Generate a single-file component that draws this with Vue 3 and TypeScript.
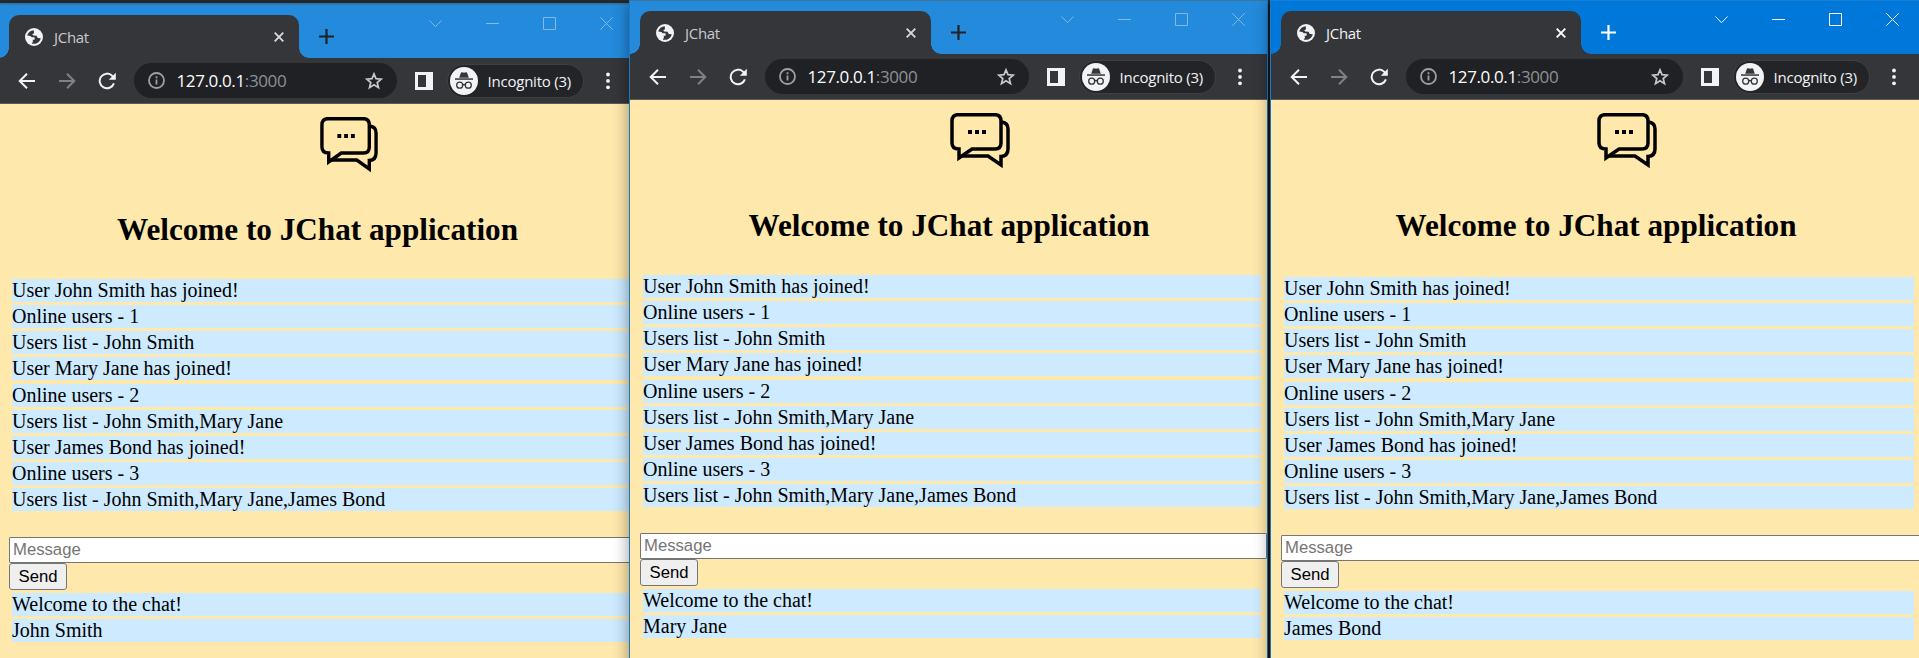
<script setup lang="ts">
interface ChatWindow {
  id: string
  user: string
  x: number
  y: number
  width: number
  tabWidth: number
  active: boolean
  logoWidth: number
  headGap: number
  listGap: number
  contentWidth: number
  listWidth: number
}

const windows: ChatWindow[] = [
  { id: 'john', user: 'John Smith', x: -1, y: 4, width: 636, tabWidth: 290, active: false, logoWidth: 58, headGap: 39, listGap: 32, contentWidth: 617, listWidth: 630 },
  { id: 'mary', user: 'Mary Jane', x: 630, y: 0, width: 637, tabWidth: 291, active: false, logoWidth: 60, headGap: 39, listGap: 32, contentWidth: 618, listWidth: 618 },
  { id: 'james', user: 'James Bond', x: 1271, y: 0, width: 650, tabWidth: 300, active: true, logoWidth: 60, headGap: 39, listGap: 34, contentWidth: 630, listWidth: 630 },
]

const events: string[] = [
  'User John Smith has joined!',
  'Online users - 1',
  'Users list - John Smith',
  'User Mary Jane has joined!',
  'Online users - 2',
  'Users list - John Smith,Mary Jane',
  'User James Bond has joined!',
  'Online users - 3',
  'Users list - John Smith,Mary Jane,James Bond',
]
</script>

<template>
  <div class="desktop">
    <section
      v-for="w in windows"
      :key="w.id"
      class="window"
      :class="{ active: w.active }"
      :style="{ left: w.x + 'px', top: w.y + 'px', width: w.width + 'px' }"
    >
      <header class="titlebar">
        <div class="tab" :style="{ width: w.tabWidth + 'px' }">
          <svg class="globe" viewBox="0 0 18 18">
            <circle cx="9" cy="9" r="9" fill="#f1f3f4" />
            <path d="M8.800 2.200 C5.500 2.300 3 4.500 2.200 7.600 L5.400 7.900 L6.800 9.200 L9.600 9.300 V11.700 H7.600 L8 13.700 L6.700 15.400 C10.500 16.800 15 14.300 15.700 10.200 L12.700 10.100 L11.600 7.700 L8.300 7.500 L7.200 6.300 L9 5.200 Z" fill="#35363a" />
          </svg>
          <span class="tab-title">JChat</span>
          <svg class="tab-close" viewBox="0 0 10 10"><path d="M.7 .7 9.300 9.300M9.300 .7 .7 9.300" /></svg>
        </div>
        <svg class="plus" viewBox="0 0 15 15"><path d="M7.500 0V15M0 7.500H15" /></svg>
        <div class="controls">
          <svg viewBox="0 0 13 13"><path d="M.5 3.500 6.500 9.700 12.500 3.500" /></svg>
          <svg viewBox="0 0 13 13"><path d="M0 6.500H13" /></svg>
          <svg viewBox="0 0 13 13"><path d="M.5 .5H12.500V12.500H.5Z" /></svg>
          <svg viewBox="0 0 13 13"><path d="M.3 .3 12.700 12.700M12.700 .3 .3 12.700" /></svg>
        </div>
      </header>

      <nav class="toolbar">
        <svg class="nav-icon" viewBox="0 0 18 18"><path d="M17 9H2M9 1.700 1.700 9 9 16.300" /></svg>
        <svg class="nav-icon forward" viewBox="0 0 18 18"><path d="M1 9H16M9 1.700 16.300 9 9 16.300" /></svg>
        <svg class="nav-icon reload" viewBox="0 0 18 18">
          <path d="M15.900 11.300A7.300 7.300 0 1 1 14.300 3.900L16 5.700" />
          <path class="solid" d="M17.800 .8V7.800H10.800Z" />
        </svg>
        <div class="address">
          <svg class="info" viewBox="0 0 17 17">
            <circle cx="8.5" cy="8.5" r="7.500" />
            <path d="M8.500 7.500V12.500M8.500 4.300V6.200" />
          </svg>
          <span class="url">127.0.0.1<span class="port">:3000</span></span>
          <svg class="star" viewBox="0 0 18 18">
            <path d="M9 1.900 11 6.700 16.200 7.100 12.200 10.500 13.500 15.600 9 12.800 4.500 15.600 5.800 10.500 1.800 7.100 7 6.700Z" />
          </svg>
        </div>
        <svg class="panel" viewBox="0 0 18 18"><path fill-rule="evenodd" d="M0 0H18V18H0ZM3 3V15H11V3Z" /></svg>
        <div class="profile">
          <svg class="avatar" viewBox="0 0 28 28">
            <circle cx="14" cy="14" r="14" fill="#f1f3f4" />
            <g fill="#35363a">
              <path d="M9.200 10.700 10.900 5.700Q11.200 5 12 5.200L14 5.800 16 5.200Q16.800 5 17.100 5.700L18.800 10.700Z" />
              <rect x="5" y="11.300" width="18" height="1.500" />
            </g>
            <g fill="none" stroke="#35363a" stroke-width="1.300">
              <circle cx="9.700" cy="18.200" r="3" />
              <circle cx="18.300" cy="18.200" r="3" />
              <path d="M12.700 18Q14 17 15.300 18" />
            </g>
          </svg>
          <span class="profile-name">Incognito (3)</span>
        </div>
        <svg class="dots" viewBox="0 0 4 18">
          <circle cx="2" cy="2.500" r="1.900" /><circle cx="2" cy="8.900" r="1.900" /><circle cx="2" cy="15.300" r="1.900" />
        </svg>
      </nav>

      <main class="page">
        <div class="intro" :style="{ width: w.contentWidth + 'px' }">
          <svg class="logo" viewBox="0 0 60 56" preserveAspectRatio="none" :style="{ width: w.logoWidth + 'px' }">
            <path d="M8 1.700H45Q51 1.700 51 8V30Q51 36 45 36H22L9 45V36Q2 36 2 30V8Q2 1.700 8 1.700Z" />
            <path d="M51 9Q58 9.500 58 16V36Q58 43 51 43.500V52L38 43H12" />
            <path class="solid" d="M18 17h4v4h-4zM25 17h4v4h-4zM32 17h4v4h-4z" />
          </svg>
          <h2 :style="{ marginTop: w.headGap + 'px', marginBottom: w.listGap + 'px' }">Welcome to JChat application</h2>
        </div>
        <ul class="messages" :style="{ width: w.listWidth + 'px' }">
          <li v-for="line in events" :key="line">{{ line }}</li>
        </ul>
        <form class="composer" :style="{ width: w.listWidth + 9 + 'px' }" @submit.prevent>
          <input type="text" placeholder="Message" />
          <button type="submit">Send</button>
        </form>
        <ul class="messages" :style="{ width: w.listWidth + 'px' }">
          <li>Welcome to the chat!</li>
          <li>{{ w.user }}</li>
        </ul>
      </main>
    </section>
  </div>
</template>

<style>
html,
body {
  margin: 0;
  overflow: hidden;
}
</style>

<style scoped>
.desktop {
  position: relative;
  width: 1919px;
  height: 658px;
  overflow: hidden;
  background: linear-gradient(#2d2d2d 0 4px, #1c1c1c 4px);
}
.window {
  position: absolute;
  height: 680px;
  box-sizing: border-box;
  display: flex;
  flex-direction: column;
  background: #ffe8ac;
  box-shadow: 0 0 0 1px #1b7ac6, 0 3px 15px 1px rgba(0, 0, 0, 0.42);
  font-family: 'Open Sans', 'Noto Sans', sans-serif;
}
.titlebar {
  display: flex;
  height: 54px;
  box-sizing: border-box;
  border-top: 1px solid #3e759f;
  padding: 10px 22px 0 10px;
  background: #238adc;
}
.active .titlebar {
  background: #0078d9;
  border-top-color: #137fd6;
}
.tab {
  position: relative;
  display: flex;
  align-items: center;
  box-sizing: border-box;
  height: 43px;
  flex: none;
  padding: 0 15px 0 16px;
  border-radius: 10px 10px 0 0;
  background: #35363a;
}
.tab::before,
.tab::after {
  content: '';
  position: absolute;
  bottom: 0;
  width: 10px;
  height: 10px;
}
.tab::before {
  left: -10px;
  background: radial-gradient(circle at 0 0, transparent 9.500px, #35363a 10px);
}
.tab::after {
  right: -10px;
  background: radial-gradient(circle at 100% 0, transparent 9.500px, #35363a 10px);
}
.globe {
  width: 18px;
  height: 18px;
}
.tab-title {
  margin-left: 11px;
  flex: 1;
  font-size: 15px;
  letter-spacing: -0.3px;
  color: #c9cbce;
}
.active .tab-title {
  color: #f1f3f4;
}
.tab-close {
  width: 10px;
  height: 10px;
  stroke: #d5d7da;
  stroke-width: 1.900;
}
.active .tab-close {
  stroke: #fff;
}
.plus {
  width: 15px;
  height: 15px;
  margin: 14px 0 0 20px;
  stroke: #202124;
  stroke-width: 2.200;
}
.active .plus {
  stroke: #fff;
}
.controls {
  display: flex;
  gap: 44px;
  margin: 2px 0 0 auto;
}
.controls svg {
  width: 13px;
  height: 13px;
  fill: none;
  stroke: #7fbaea;
  stroke-width: 1;
}
.active .controls svg {
  stroke: #fff;
}
.toolbar {
  display: flex;
  align-items: center;
  height: 46px;
  box-sizing: border-box;
  flex: none;
  border-bottom: 1px solid #5b5a5b;
  padding: 0 25.500px 0 18.500px;
  background: #35363a;
}
.nav-icon {
  width: 18px;
  height: 18px;
  flex: none;
  fill: none;
  stroke: #f1f3f4;
  stroke-width: 2;
  margin-right: 22px;
}
.nav-icon.forward {
  stroke: #808184;
}
.nav-icon.reload {
  margin-right: 18px;
}
.solid {
  fill: #f1f3f4;
  stroke: none;
}
.address {
  flex: 1;
  display: flex;
  align-items: center;
  height: 35px;
  box-sizing: border-box;
  padding: 0 14px;
  border-radius: 18px;
  background: #202124;
}
.info {
  width: 17px;
  height: 17px;
  fill: none;
  stroke: #9aa0a6;
  stroke-width: 1.800;
}
.url {
  flex: 1;
  margin-left: 12px;
  font-size: 17px;
  letter-spacing: -0.38px;
  color: #fff;
}
.port {
  color: #8d9196;
}
.star {
  width: 18px;
  height: 18px;
  fill: none;
  stroke: #c6c8ca;
  stroke-width: 1.700;
}
.panel {
  width: 18px;
  height: 18px;
  margin: 0 14.500px 0 18px;
  fill: #f1f3f4;
}
.profile {
  display: flex;
  align-items: center;
  box-sizing: border-box;
  width: 137px;
  height: 34px;
  flex: none;
  padding-left: 1.500px;
  border: 1px solid #3f4044;
  border-radius: 17px;
  background: #232428;
}
.avatar {
  width: 28px;
  height: 28px;
}
.profile-name {
  margin-left: 10px;
  font-size: 15px;
  letter-spacing: -0.22px;
  white-space: nowrap;
  color: #f1f3f4;
}
.dots {
  width: 4px;
  height: 18px;
  margin-left: 21.500px;
  fill: #f1f3f4;
}
.page {
  flex: 1;
  overflow: hidden;
  padding: 13px 0 0 10px;
  font-family: 'Liberation Serif', 'Times New Roman', serif;
  font-size: 20px;
  color: #000;
}
.intro {
  display: flex;
  flex-direction: column;
  align-items: center;
}
.logo {
  height: 56px;
  margin-left: 62px;
  fill: none;
  stroke: #000;
  stroke-width: 3.500;
}
.logo .solid {
  fill: #000;
}
h2 {
  font-size: 31.200px;
  line-height: 35px;
  font-weight: 700;
  white-space: nowrap;
}
.messages {
  display: flex;
  flex-direction: column;
  gap: 3.140px;
  margin: 0 0 0 3px;
  padding: 0;
  list-style: none;
}
.messages li {
  height: 23px;
  line-height: 23px;
  background: #cdeafe;
}
.composer {
  display: flex;
  flex-direction: column;
  align-items: flex-start;
  margin: 26px 0 3px;
}
.composer input {
  width: 100%;
  height: 26px;
  box-sizing: border-box;
  border: 1px solid #767676;
  border-radius: 1px;
  padding: 0 3px;
  background: #fff;
  font: 16.700px 'Liberation Sans', Arial, sans-serif;
}
.composer input::placeholder {
  color: #757575;
}
.composer button {
  width: 58px;
  height: 27px;
  box-sizing: border-box;
  border: 1px solid #767676;
  border-radius: 3px;
  padding: 0;
  background: #efefef;
  color: #000;
  font: 16.700px 'Liberation Sans', Arial, sans-serif;
}
</style>
